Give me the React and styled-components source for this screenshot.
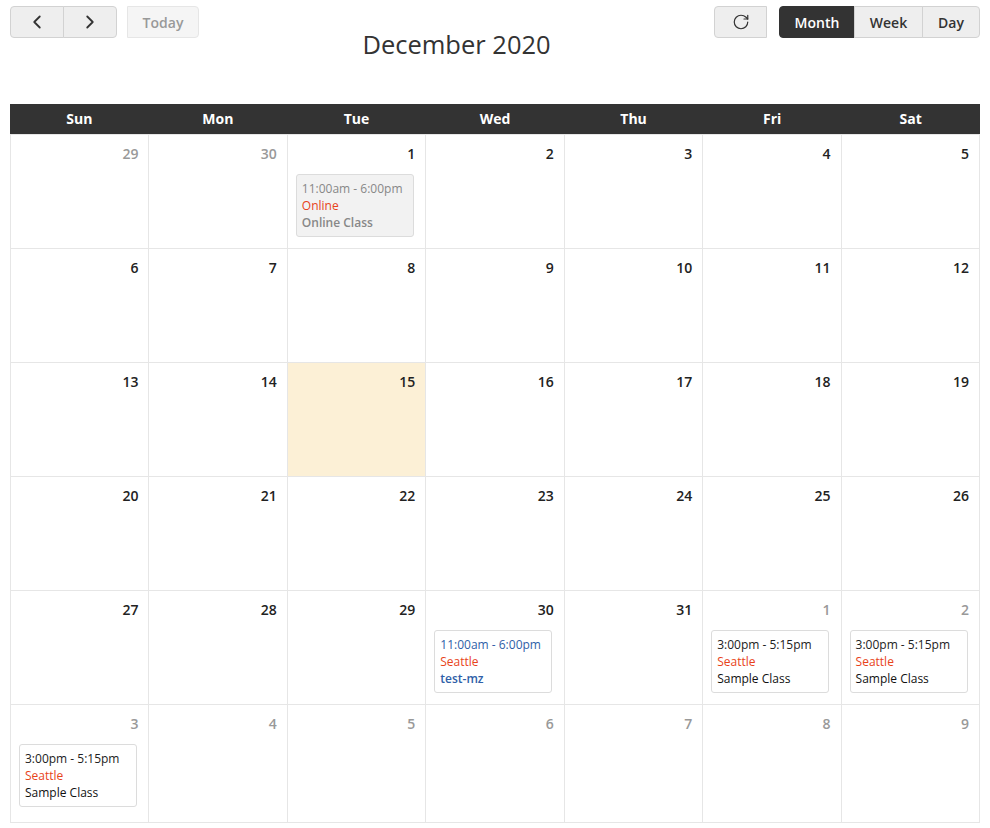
import React from 'react';
import styled, { createGlobalStyle } from 'styled-components';
import { ChevronLeft, ChevronRight, RotateCw } from 'lucide-react';

const GlobalStyle = createGlobalStyle`
  html, body {
    margin: 0;
    padding: 0;
    background: #fff;
    font-family: "Open Sans", "Liberation Sans", sans-serif;
    color: #333;
  }
  * { box-sizing: border-box; }
`;

const Page = styled.div`
  padding: 6px 10px 0 10px;
  width: 990px;
`;

const Toolbar = styled.div`
  display: flex;
  justify-content: space-between;
  align-items: flex-start;
  height: 98px;
`;

const Side = styled.div`
  display: flex;
  gap: ${({ $gap }) => $gap}px;
`;

const Group = styled.div`
  display: flex;
`;

const Btn = styled.button`
  height: 32px;
  width: ${({ $w }) => $w}px;
  display: flex;
  align-items: center;
  justify-content: center;
  font-family: inherit;
  font-size: 14px;
  font-weight: 600;
  padding: 0;
  color: ${({ $active }) => ($active ? '#fff' : '#333')};
  background: ${({ $active }) => ($active ? '#333' : '#eee')};
  border: 1px solid ${({ $active }) => ($active ? '#333' : '#d2d2d2')};
  border-radius: 0;
  margin-left: -1px;
  &:first-child {
    margin-left: 0;
    border-top-left-radius: 4px;
    border-bottom-left-radius: 4px;
  }
  &:last-child {
    border-top-right-radius: 4px;
    border-bottom-right-radius: 4px;
  }
  &:disabled {
    background: #f5f5f5;
    color: #999;
    border-color: #e6e6e6;
  }
`;

const Title = styled.h2`
  margin: 23px 0 0 0;
  font-size: 25.5px;
  font-weight: 400;
  color: #333;
  line-height: 30px;
`;

const Head = styled.div`
  display: grid;
  grid-template-columns: repeat(7, 1fr);
  background: #333;
  height: 30px;
`;

const HeadCell = styled.div`
  color: #fff;
  font-size: 14px;
  font-weight: 700;
  text-align: center;
  line-height: 30px;
`;

const Grid = styled.div`
  display: grid;
  grid-template-columns: repeat(7, 1fr);
  grid-template-rows: repeat(5, 114px) 118px;
  border-left: 1px solid #e6e6e6;
  border-top: 1px solid #e6e6e6;
`;

const Cell = styled.div`
  border-right: 1px solid #e6e6e6;
  border-bottom: 1px solid #e6e6e6;
  background: ${({ $today }) => ($today ? '#fcf0d6' : '#fff')};
  padding: 9px 10px 0 8px;
  display: flex;
  flex-direction: column;
`;

const DayNum = styled.div`
  text-align: right;
  font-size: 14px;
  font-weight: 600;
  line-height: 20px;
  color: ${({ $other }) => ($other ? '#999' : '#222')};
`;

const Event = styled.div`
  margin-top: 10px;
  width: 118px;
  border: 1px solid #dcdcdc;
  border-radius: 3px;
  background: ${({ $bg }) => $bg || '#fff'};
  padding: 5px 5px 5px 5px;
  font-size: 12px;
  line-height: 17px;
`;

const EvTime = styled.div`
  color: ${({ $c }) => $c};
  white-space: nowrap;
`;

const EvPlace = styled.div`
  color: #e8431a;
`;

const EvName = styled.div`
  color: ${({ $c }) => $c};
  font-weight: ${({ $w }) => $w};
`;

const days = ['Sun', 'Mon', 'Tue', 'Wed', 'Thu', 'Fri', 'Sat'];

const themes = {
  gray: { bg: '#f2f2f2', time: '#888', name: '#888', w: 600 },
  blue: { bg: '#fff', time: '#2f5fa8', name: '#2f5fa8', w: 600 },
  dark: { bg: '#fff', time: '#222', name: '#111', w: 400 },
};

const events = {
  '0-2': { time: '11:00am - 6:00pm', place: 'Online', name: 'Online Class', t: 'gray' },
  '4-3': { time: '11:00am - 6:00pm', place: 'Seattle', name: 'test-mz', t: 'blue' },
  '4-5': { time: '3:00pm - 5:15pm', place: 'Seattle', name: 'Sample Class', t: 'dark' },
  '4-6': { time: '3:00pm - 5:15pm', place: 'Seattle', name: 'Sample Class', t: 'dark' },
  '5-0': { time: '3:00pm - 5:15pm', place: 'Seattle', name: 'Sample Class', t: 'dark' },
};

function buildCells() {
  const cells = [];
  for (let i = 0; i < 42; i++) {
    const n = i - 2 + 1; // Dec 1 is a Tuesday
    let label, other = false;
    if (n < 1) {
      label = 30 + n;
      other = true;
    } else if (n > 31) {
      label = n - 31;
      other = true;
    } else {
      label = n;
    }
    cells.push({ key: `${Math.floor(i / 7)}-${i % 7}`, label, other, today: !other && n === 15 });
  }
  return cells;
}

export default function App() {
  const cells = buildCells();
  return (
    <>
      <GlobalStyle />
      <Page>
        <Toolbar>
          <Side $gap={11}>
            <Group>
              <Btn $w={54}><ChevronLeft size={22} strokeWidth={2} /></Btn>
              <Btn $w={54}><ChevronRight size={22} strokeWidth={2} /></Btn>
            </Group>
            <Btn $w={72} disabled>Today</Btn>
          </Side>
          <Title>December 2020</Title>
          <Side $gap={12}>
            <Btn $w={53}><RotateCw size={18} strokeWidth={1.6} /></Btn>
            <Group>
              <Btn $w={76} $active>Month</Btn>
              <Btn $w={69}>Week</Btn>
              <Btn $w={58}>Day</Btn>
            </Group>
          </Side>
        </Toolbar>
        <Head>
          {days.map((d) => <HeadCell key={d}>{d}</HeadCell>)}
        </Head>
        <Grid>
          {cells.map((c) => {
            const ev = events[c.key];
            const th = ev && themes[ev.t];
            return (
              <Cell key={c.key} $today={c.today}>
                <DayNum $other={c.other}>{c.label}</DayNum>
                {ev && (
                  <Event $bg={th.bg}>
                    <EvTime $c={th.time}>{ev.time}</EvTime>
                    <EvPlace>{ev.place}</EvPlace>
                    <EvName $c={th.name} $w={th.w}>{ev.name}</EvName>
                  </Event>
                )}
              </Cell>
            );
          })}
        </Grid>
      </Page>
    </>
  );
}
